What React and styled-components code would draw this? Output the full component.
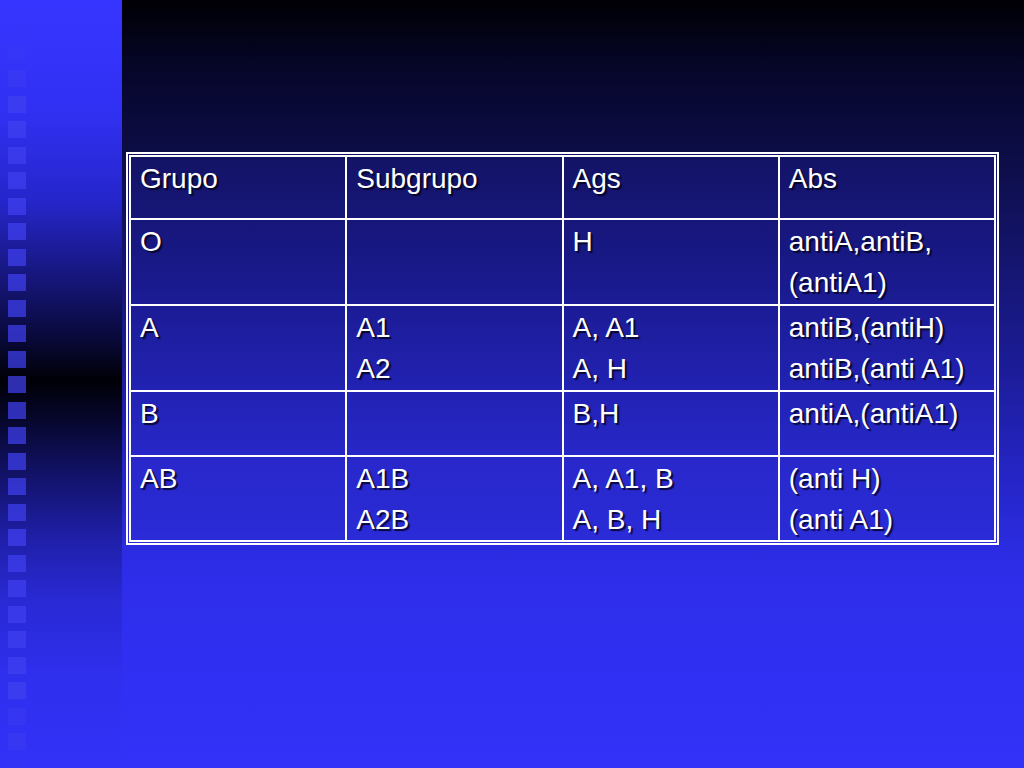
import React from 'react';
import styled, { createGlobalStyle } from 'styled-components';

// --- DATA ---
const HEADER = ['Grupo', 'Subgrupo', 'Ags', 'Abs'];

const ROWS = [
  { height: 86, cells: ['O', '', 'H', 'antiA,antiB,\n(antiA1)'] },
  { height: 86, cells: ['A', 'A1\nA2', 'A, A1\nA, H', 'antiB,(antiH)\nantiB,(anti A1)'] },
  { height: 65, cells: ['B', '', 'B,H', 'antiA,(antiA1)'] },
  { height: 81, cells: ['AB', 'A1B\nA2B', 'A, A1, B\nA, B, H', '(anti H)\n(anti A1)'] }
];

const SQUARE_COUNT = 30;

// --- STYLES ---
const GlobalStyle = createGlobalStyle`
  html, body { margin: 0; padding: 0; background: #000; }
  body { font-family: "Liberation Sans", Arial, sans-serif; overflow: hidden; }
`;

const Slide = styled.div`
  display: flex; width: 1024px; height: 768px; overflow: hidden;
`;

const Strip = styled.div`
  width: 122px; flex-shrink: 0; box-sizing: border-box;
  padding: 19px 0 0 8px;
  display: flex; flex-direction: column; gap: 8.5px;
  background: linear-gradient(to bottom,
    #3535ff 0%, #3131f4 14%, #2626cc 26%, #16167c 36%, #09093a 44%,
    #000006 49.5%, #070730 55%, #12126a 62%, #1f1fa8 70%, #2929d4 78%,
    #2f2fee 88%, #3232f8 100%);
`;

const Square = styled.div`
  width: 18px; height: 17px; flex-shrink: 0;
  background: rgba(64, 64, 240, 0.72);
  opacity: ${p => p.$fade};
`;

const Main = styled.div`
  flex: 1; box-sizing: border-box;
  padding: 152px 0 0 4px;
  background: linear-gradient(to bottom,
    #000004 0%, #06062a 9%, #0d0d46 20%, #14146c 33%, #1c1c98 48%,
    #2525c6 62%, #2d2de8 74%, #3030f4 88%, #3232f8 100%);
`;

const TableFrame = styled.div`
  width: 873px; box-sizing: border-box;
  border: 2px solid #fff; padding: 1px;
  background: linear-gradient(to bottom,
    #131365 0%, #19198a 30%, #2121b0 58%, #2828cc 80%, #2b2bd8 100%);
`;

const Table = styled.table`
  width: 100%; border-collapse: collapse; table-layout: fixed;
`;

const Row = styled.tr`
  height: ${p => p.$h}px;
`;

const Cell = styled.td`
  border: 2px solid #fff;
  padding: 1px 9px 0 9px;
  vertical-align: top;
  white-space: pre-line;
  color: #fff;
  font-size: 28px;
  line-height: 41px;
  text-shadow: 2px 2px 1px rgba(0, 0, 20, 0.8);
`;

function fadeFor(i) {
  const y = 19 + i * 25.5;
  if (y < 30) return 0.06;
  if (y < 55) return 0.25;
  if (y < 80) return 0.55;
  if (y > 740) return 0.15;
  if (y > 700) return 0.45;
  return 1;
}

// --- APP ---
export default function App() {
  return (
    <Slide>
      <GlobalStyle />
      <Strip>
        {Array.from({ length: SQUARE_COUNT }, (_, i) => (
          <Square key={i} $fade={fadeFor(i)} />
        ))}
      </Strip>
      <Main>
        <TableFrame>
          <Table>
            <tbody>
              <Row $h={63}>
                {HEADER.map(h => <Cell key={h}>{h}</Cell>)}
              </Row>
              {ROWS.map((row, r) => (
                <Row key={r} $h={row.height}>
                  {row.cells.map((c, i) => <Cell key={i}>{c}</Cell>)}
                </Row>
              ))}
            </tbody>
          </Table>
        </TableFrame>
      </Main>
    </Slide>
  );
}
